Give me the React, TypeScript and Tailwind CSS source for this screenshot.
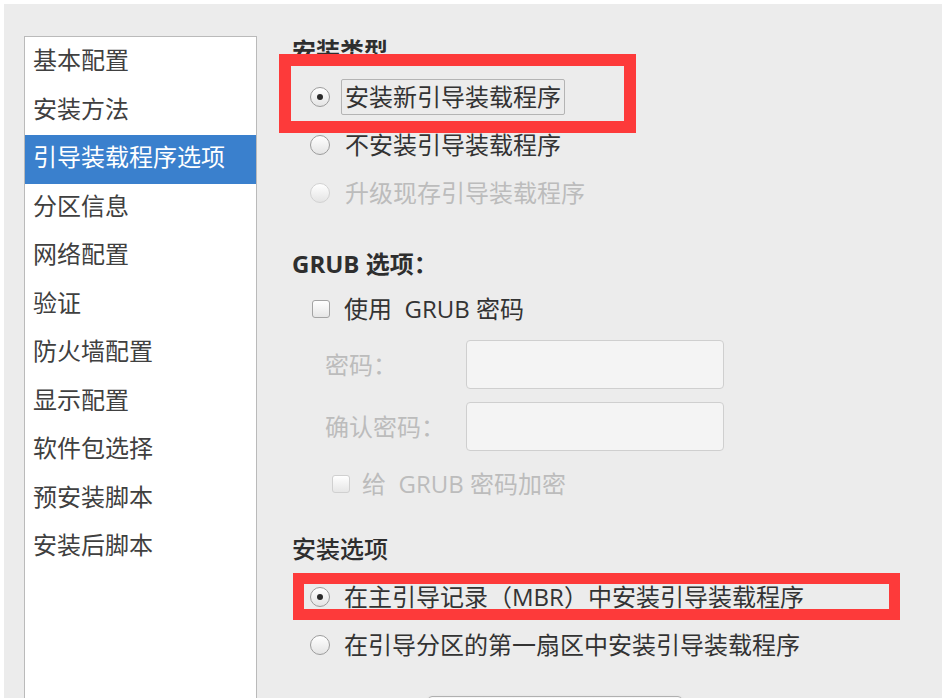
import React from "react"

const font = { fontFamily: '"Open Sans", "Noto Sans CJK SC", sans-serif' }

function Radio({ checked, disabled }: { checked?: boolean; disabled?: boolean }) {
    return (
        <div
            className={`flex h-[20px] w-[20px] shrink-0 items-center justify-center rounded-full border bg-gradient-to-b from-white to-[#e4e4e4] ${disabled ? "border-[#d2d2d2]" : "border-[#9c9c9c]"}`}
        >
            {checked && <div className="h-[6px] w-[6px] rounded-full bg-[#2b2b2b]" />}
        </div>
    )
}

function Check({ disabled }: { disabled?: boolean }) {
    return (
        <div
            className={`h-[18px] w-[18px] shrink-0 rounded-[3px] border bg-gradient-to-b from-white to-[#e6e6e6] ${disabled ? "border-[#d0d0d0]" : "border-[#a4a4a4]"}`}
        />
    )
}

const menu = [
    "基本配置",
    "安装方法",
    "引导装载程序选项",
    "分区信息",
    "网络配置",
    "验证",
    "防火墙配置",
    "显示配置",
    "软件包选择",
    "预安装脚本",
    "安装后脚本",
]

export default function App() {
    return (
        <main className="h-[698px] w-[943px] overflow-hidden bg-white pl-[4px] pt-[4px] pr-[1px]" style={font}>
            <div className="relative flex h-[694px] w-full overflow-hidden bg-[#ececec] text-[24px] text-[#3a3a3a]">
                {/* sidebar */}
                <div className="ml-[20px] mt-[32px] h-[700px] w-[233px] shrink-0 border border-[#bababa] bg-white pt-[1px]">
                    {menu.map((m, i) => (
                        <div
                            key={m}
                            className={`flex h-[48.5px] items-center pb-[4px] pl-[8px] ${i === 2 ? "bg-[#3a80cd] text-white" : "text-[#404040]"}`}
                        >
                            {m}
                        </div>
                    ))}
                </div>

                {/* content */}
                <div className="ml-[35px] block pt-[31px]">
                    <div className="flex h-[32px] items-center font-bold text-[#2e2e2e]">安装类型</div>

                    <div className="mt-[6px] flex h-[48px] items-center pl-[18px]">
                        <Radio checked />
                        <div className="ml-[11px] flex h-[36px] items-center rounded-[2px] border border-[#b4b4b4] px-[3px] text-[#333]">
                            安装新引导装载程序
                        </div>
                    </div>
                    <div className="flex h-[48px] items-center pl-[18px]">
                        <Radio />
                        <span className="ml-[15px] text-[#333]">不安装引导装载程序</span>
                    </div>
                    <div className="flex h-[48px] items-center pl-[18px]">
                        <Radio disabled />
                        <span className="ml-[15px] text-[#bcbcbc]">升级现存引导装载程序</span>
                    </div>

                    <div className="mt-[31px] flex h-[32px] items-center font-bold text-[#2e2e2e]">GRUB 选项：</div>

                    <div className="mt-[5px] flex h-[48px] items-center pl-[20px]">
                        <Check />
                        <span className="ml-[14px] whitespace-pre text-[#333]">使用  GRUB 密码</span>
                    </div>

                    <div className="mt-[7px] flex h-[49px] items-center pl-[33px]">
                        <span className="w-[141px] text-[#bcbcbc]">密码：</span>
                        <div className="h-[49px] w-[258px] rounded-[4px] border border-[#cfcfcf] bg-[#f4f4f4]" />
                    </div>
                    <div className="mt-[13px] flex h-[49px] items-center pl-[33px]">
                        <span className="w-[141px] text-[#bcbcbc]">确认密码：</span>
                        <div className="h-[49px] w-[258px] rounded-[4px] border border-[#cfcfcf] bg-[#f4f4f4]" />
                    </div>

                    <div className="mt-[9px] flex h-[48px] items-center pl-[40px]">
                        <Check disabled />
                        <span className="ml-[12px] whitespace-pre text-[#bcbcbc]">给  GRUB 密码加密</span>
                    </div>

                    <div className="mt-[25px] flex h-[32px] items-center font-medium text-[#2e2e2e]">安装选项</div>

                    <div className="mt-[8px] flex h-[48px] items-center pl-[18px]">
                        <Radio checked />
                        <span className="ml-[14px] text-[#333]">在主引导记录（MBR）中安装引导装载程序</span>
                    </div>
                    <div className="flex h-[48px] items-center pl-[18px]">
                        <Radio />
                        <span className="ml-[14px] text-[#333]">在引导分区的第一扇区中安装引导装载程序</span>
                    </div>

                    <div className="ml-[136px] mt-[27px] h-[40px] w-[254px] rounded-[4px] border border-[#b0b0b0] bg-gradient-to-b from-[#f6f6f6] to-[#e2e2e2] shadow" />
                </div>

                {/* red annotation boxes */}
                <div className="absolute left-[275px] top-[50px] h-[79px] w-[357px] border-[12px] border-[#fd3a3a]" />
                <div className="absolute left-[289px] top-[569px] h-[47px] w-[607px] border-[11px] border-[#fd3a3a]" />
            </div>
        </main>
    )
}
